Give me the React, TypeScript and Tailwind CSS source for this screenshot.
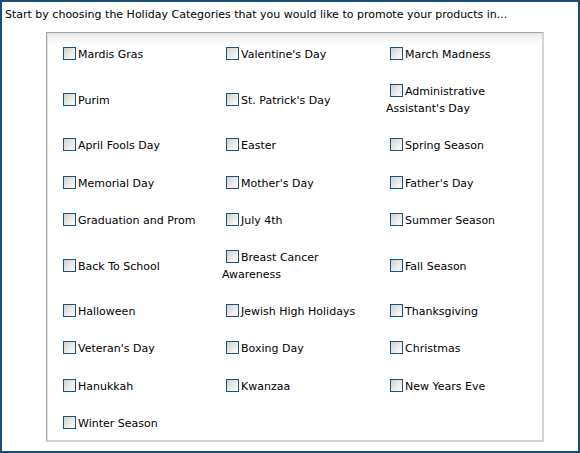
const holidays: React.ReactNode[] = [
  'Mardis Gras',
  "Valentine's Day",
  'March Madness',
  'Purim',
  "St. Patrick's Day",
  <>
    Administrative
    <br />
    Assistant's Day
  </>,
  'April Fools Day',
  'Easter',
  'Spring Season',
  'Memorial Day',
  "Mother's Day",
  "Father's Day",
  'Graduation and Prom',
  'July 4th',
  'Summer Season',
  'Back To School',
  <>
    Breast Cancer
    <br />
    Awareness
  </>,
  'Fall Season',
  'Halloween',
  'Jewish High Holidays',
  'Thanksgiving',
  "Veteran's Day",
  'Boxing Day',
  'Christmas',
  'Hanukkah',
  'Kwanzaa',
  'New Years Eve',
  'Winter Season'
];

function Check() {
  return (
    <span className="inline-block w-[13px] h-[13px] ml-[4px] mr-[2px] align-[-2px] border border-[#1c5180] bg-gradient-to-br from-[#d2d2cc] to-white" />
  );
}

export default function App() {
  return (
    <div
      className="w-[580px] h-[453px] border-2 border-[#1a4d73] bg-white text-[11px] text-black"
      style={{ fontFamily: '"DejaVu Sans", Verdana, sans-serif' }}
    >
      <p className="px-[3px] pt-[6px] leading-[14px]">
        Start by choosing the Holiday Categories that you would like to promote your products in...
      </p>
      <div className="mt-[10px] ml-[44px] w-[498px] h-[410px] border-t border-l border-r-2 border-b-2 border-t-[#a5a5a5] border-l-[#a5a5a5] border-r-[#d4d4d4] border-b-[#d4d4d4] bg-[linear-gradient(#ebebeb,#ffffff_12px)] shadow-[inset_1px_1px_0_#e2e2e2] pt-[3px] pl-[12px]">
        <div className="grid grid-cols-[163px_164px_1fr] items-center">
          {holidays.map((h, i) => (
            <div key={i} className="py-[10.1px] leading-[17px]">
              <Check />
              {h}
            </div>
          ))}
        </div>
      </div>
    </div>
  );
}
